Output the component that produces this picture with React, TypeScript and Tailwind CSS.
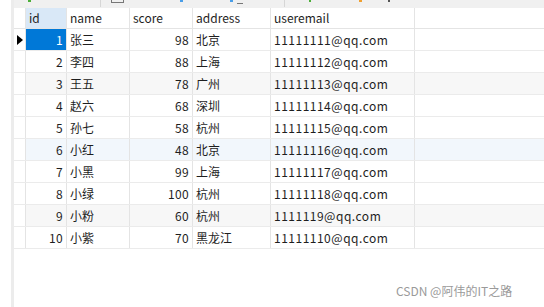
const rows = [
  { id: 1, name: "张三", score: 98, address: "北京", email: "11111111@qq.com" },
  { id: 2, name: "李四", score: 88, address: "上海", email: "11111112@qq.com" },
  { id: 3, name: "王五", score: 78, address: "广州", email: "11111113@qq.com" },
  { id: 4, name: "赵六", score: 68, address: "深圳", email: "11111114@qq.com" },
  { id: 5, name: "孙七", score: 58, address: "杭州", email: "11111115@qq.com" },
  { id: 6, name: "小红", score: 48, address: "北京", email: "11111116@qq.com" },
  { id: 7, name: "小黑", score: 99, address: "上海", email: "11111117@qq.com" },
  { id: 8, name: "小绿", score: 100, address: "杭州", email: "11111118@qq.com" },
  { id: 9, name: "小粉", score: 60, address: "杭州", email: "1111119@qq.com" },
  { id: 10, name: "小紫", score: 70, address: "黑龙江", email: "11111110@qq.com" },
];

const rowBg = (i: number) => {
  if (i === 5) return "bg-[#f2f7fc]";
  if (i === 2 || i === 8) return "bg-[#f7f7f7]";
  return "bg-white";
};

const cell = "h-full border-r border-[#e4e4e4] flex items-center leading-none";

const App = () => {
  return (
    <div
      className="w-[544px] h-[307px] bg-white flex text-[12px] text-[#1e1e1e] overflow-hidden relative"
      style={{ fontFamily: '"Noto Sans CJK SC", "Noto Sans", sans-serif' }}
    >
      <div className="w-[11px] h-full bg-white" />
      <div className="w-[3px] h-full bg-[#ececec]" />

      <div className="flex-1 flex flex-col">
        {/* toolbar, cut off at the top */}
        <div className="h-[8px] bg-[#f0f0f0] relative">
          <div className="absolute left-[14px] top-0 w-[3px] h-[2px] bg-[#4caf3a]" />
          <div className="absolute left-[86px] top-0 w-[1px] h-[7px] bg-[#d6d6d6]" />
          <div className="absolute left-[97px] top-0 w-[13px] h-[3px] border-x border-b border-[#777]" />
          <div className="absolute left-[166px] top-0 w-[3px] h-[2px] bg-[#4a9ee8]" />
          <div className="absolute left-[216px] top-0 w-[3px] h-[2px] bg-[#4a9ee8]" />
          <div className="absolute left-[223px] top-[3px] w-[6px] h-[1px] bg-[#777]" />
          <div className="absolute left-[270px] top-0 w-[1px] h-[7px] bg-[#d6d6d6]" />
          <div className="absolute left-[295px] top-0 w-[2px] h-[2px] bg-[#4caf3a]" />
          <div className="absolute left-[345px] top-0 w-[3px] h-[2px] bg-[#f0a030]" />
          <div className="absolute left-[374px] top-0 w-[2px] h-[2px] bg-[#555]" />
        </div>

        {/* header */}
        <div className="flex h-[21px] border-b border-[#e4e4e4]">
          <div className={`${cell} w-[12px]`} />
          <div className={`${cell} w-[41px] bg-[#d9e8f7] pl-[3px]`}>id</div>
          <div className={`${cell} w-[63px] pl-[3px]`}>name</div>
          <div className={`${cell} w-[63px] pl-[3px]`}>score</div>
          <div className={`${cell} w-[78px] pl-[3px]`}>address</div>
          <div className={`${cell} w-[144px] pl-[3px]`}>useremail</div>
        </div>

        {rows.map((r, i) => (
          <div key={r.id} className={`flex h-[22px] border-b border-[#ebebeb] ${rowBg(i)}`}>
            <div className={`${cell} w-[12px] bg-white ${i === 0 ? "bg-[#d9e8f7]" : ""}`}>
              {i === 0 && (
                <svg width="8" height="12" viewBox="0 0 8 12" className="ml-[2px]">
                  <path d="M1 1 L7 6 L1 11 Z" fill="#000" />
                </svg>
              )}
            </div>
            <div
              className={`${cell} w-[41px] justify-end pr-[3px] tracking-[0.3px] ${
                i === 0 ? "bg-[#0078d7] text-white" : ""
              }`}
            >
              {r.id}
            </div>
            <div className={`${cell} w-[63px] pl-[3px]`}>{r.name}</div>
            <div className={`${cell} w-[63px] justify-end pr-[3px] tracking-[0.3px]`}>{r.score}</div>
            <div className={`${cell} w-[78px] pl-[3px]`}>{r.address}</div>
            <div className={`${cell} w-[144px] pl-[3px] tracking-[0.5px]`}>{r.email}</div>
          </div>
        ))}
      </div>

      <div className="absolute left-[396px] top-[285px] text-[12px] text-[#9a9a9a] leading-none">
        CSDN @阿伟的IT之路
      </div>
    </div>
  );
};

export default App;
